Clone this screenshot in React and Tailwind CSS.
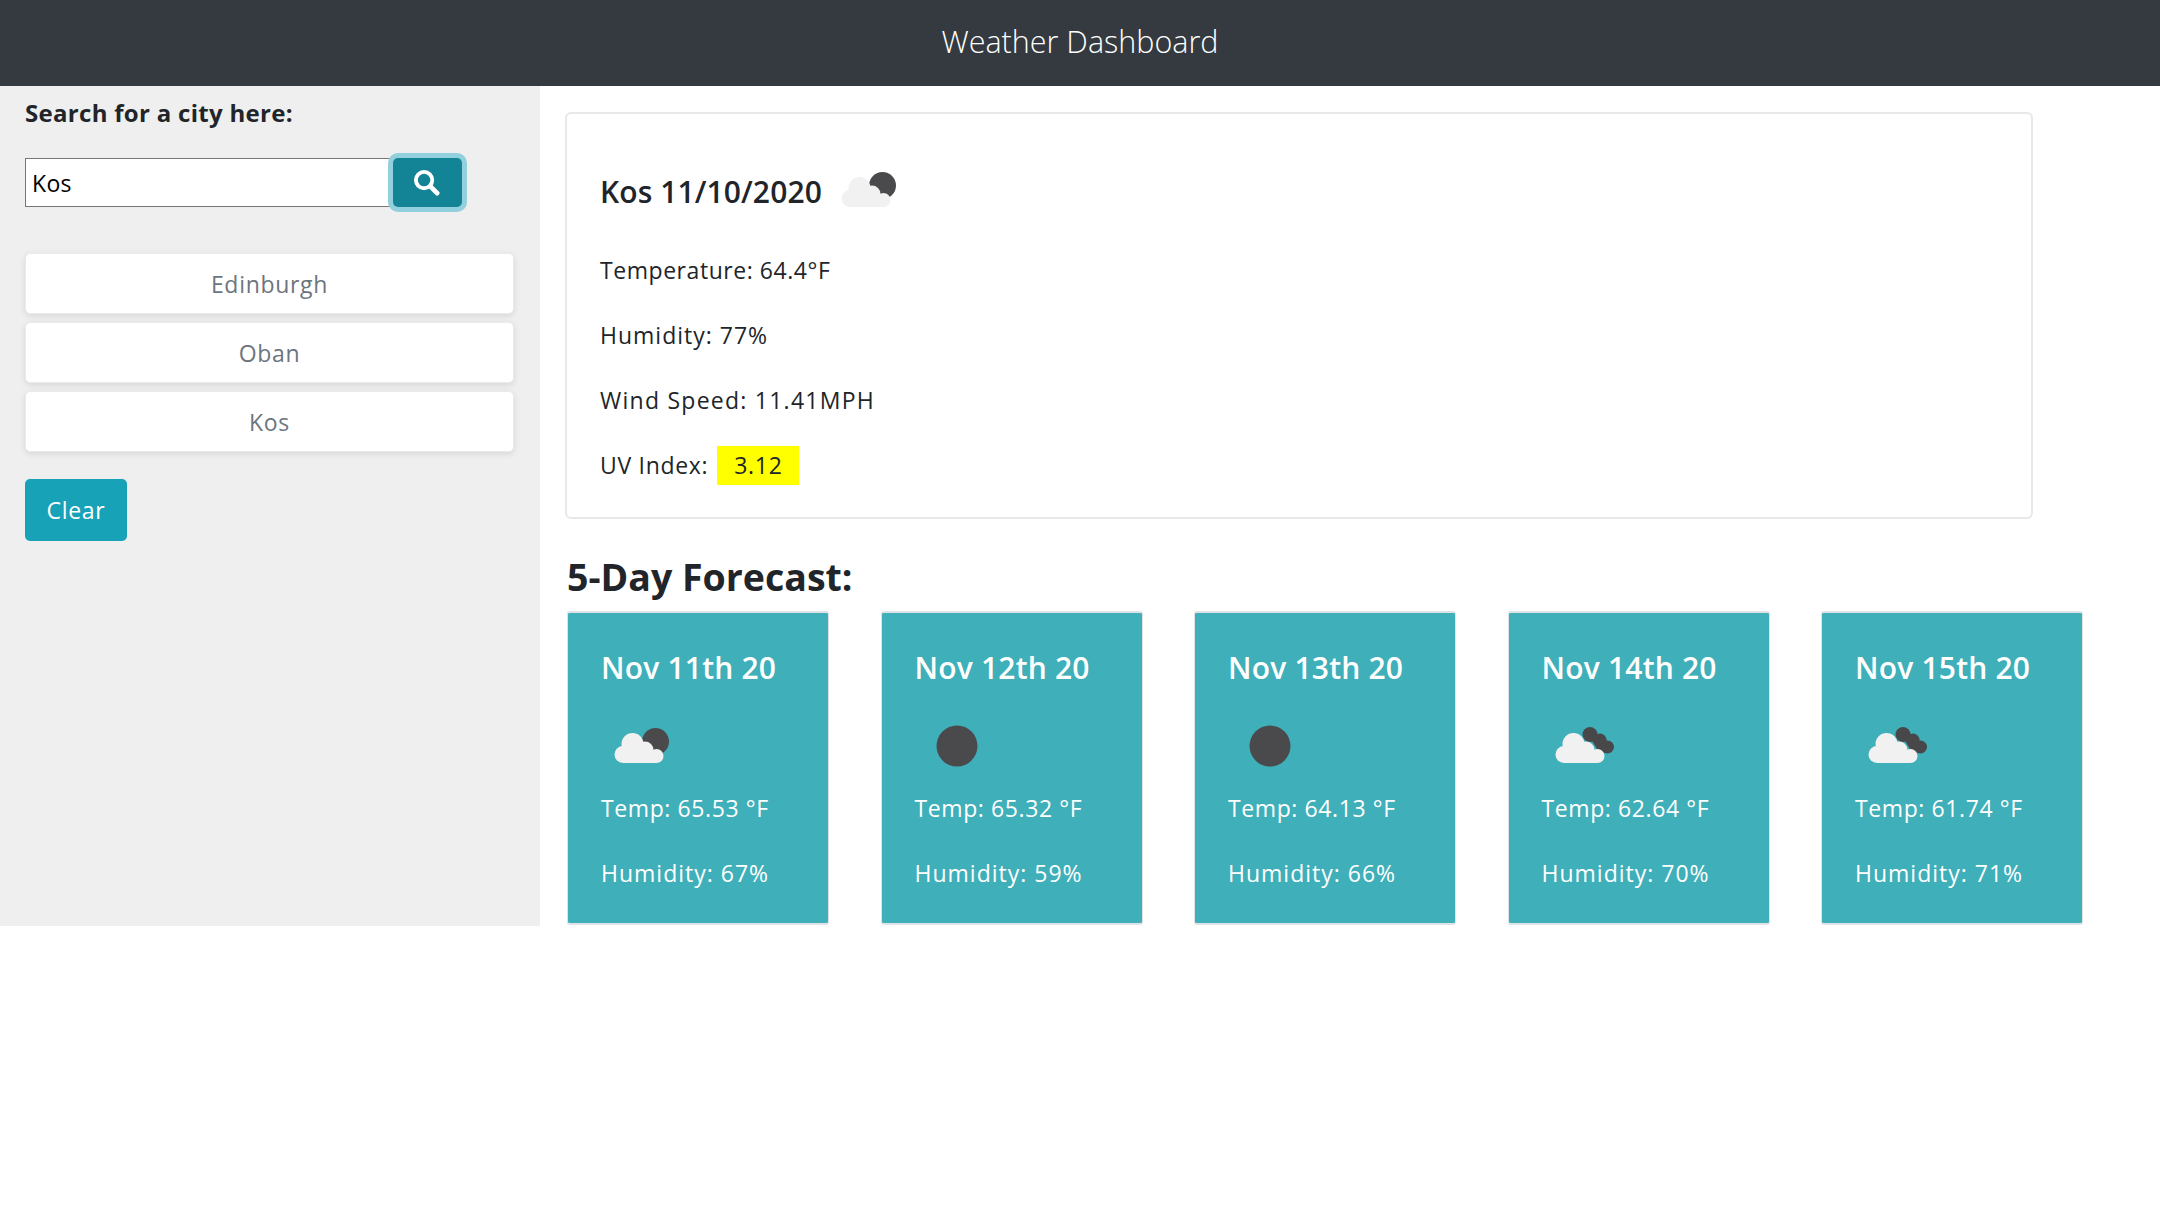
import React from 'react';

const forecast = [
  { date: 'Nov 11th 20', icon: 'few', temp: '65.53', humidity: '67' },
  { date: 'Nov 12th 20', icon: 'clear', temp: '65.32', humidity: '59' },
  { date: 'Nov 13th 20', icon: 'clear', temp: '64.13', humidity: '66' },
  { date: 'Nov 14th 20', icon: 'broken', temp: '62.64', humidity: '70' },
  { date: 'Nov 15th 20', icon: 'broken', temp: '61.74', humidity: '71' },
];

function WeatherIcon({ type }) {
  return (
    <svg width="84" height="60" viewBox="0 0 84 60" className="block shrink-0">
      {type === 'clear' && <circle cx="42" cy="30" r="20.5" fill="#4a4a4d" />}
      {type === 'few' && <circle cx="54.5" cy="25.5" r="13.5" fill="#4a4a4d" />}
      {type === 'broken' && (
        <g fill="#48484b">
          <circle cx="48" cy="18.5" r="7.5" />
          <circle cx="58" cy="24" r="6.5" />
          <circle cx="65.5" cy="31" r="6.5" />
          <path d="M44 15 L62 20 L70 34 L58 38 Z" />
        </g>
      )}
      {type !== 'clear' && (
        <g fill="#f1f1f1">
          <circle cx="22" cy="38.5" r="8.5" />
          <circle cx="31.5" cy="28" r="11" />
          <circle cx="44" cy="34" r="8.5" />
          <circle cx="55.5" cy="40" r="7" />
          <rect x="22" y="34" width="33" height="13" />
        </g>
      )}
    </svg>
  );
}

function ForecastCard({ day }) {
  return (
    <div className="w-[262px] h-[314px] bg-[#3fafb9] border-x border-y-2 border-[#dfe3e6] rounded-[3px] pl-[33px] text-white shrink-0">
      <h5 className="text-[30px] leading-[40px] font-semibold tracking-[0.2px] mt-[35px]">{day.date}</h5>
      <div className="mt-[28px]">
        <WeatherIcon type={day.icon} />
      </div>
      <p className="text-[23px] leading-[33px] tracking-[0.6px] mt-[16px]">Temp: {day.temp} °F</p>
      <p className="text-[23px] leading-[33px] tracking-[1px] mt-[32px]">Humidity: {day.humidity}%</p>
    </div>
  );
}

export default function App() {
  return (
    <div className="min-h-[1210px] bg-white text-[#212529] font-['Open_Sans','Liberation_Sans',sans-serif]">
      <header className="h-[86px] bg-[#343a40] flex items-center justify-center text-white text-[30.5px] font-light pb-[3px]">
        Weather Dashboard
      </header>
      <div className="flex items-start">
        <aside className="w-[540px] h-[840px] bg-[#efefef] px-[25px]">
          <label className="block text-[24px] leading-[36px] font-bold tracking-[0.3px] mt-[9px]">Search for a city here:</label>
          <div className="flex items-center mt-[27px]">
            <input
              type="text"
              defaultValue="Kos"
              className="w-[368px] h-[49px] bg-white border border-[#767676] pl-[6px] text-[23px] tracking-[0.3px] text-black"
            />
            <button className="relative w-[69px] h-[49px] rounded-[5px] bg-[#138496] shadow-[0_0_0_5px_#91d0dc] flex items-center justify-center pr-[2px]">
              <svg width="27" height="27" viewBox="0 0 28 28" fill="none" stroke="white">
                <circle cx="11.5" cy="11.5" r="8.5" strokeWidth="4" />
                <path d="M18 18 L25 25" strokeWidth="5" strokeLinecap="round" />
              </svg>
            </button>
          </div>
          <div className="flex flex-col gap-[8px] mt-[46px] w-[489px]">
            {['Edinburgh', 'Oban', 'Kos'].map((city) => (
              <button key={city} className="h-[61px] bg-white rounded-[5px] border border-[#eaeaea] shadow-[0_2px_6px_rgba(0,0,0,0.1)] text-[#6c757d] text-[23px] tracking-[0.7px] pt-[2px]">
                {city}
              </button>
            ))}
          </div>
          <button className="mt-[27px] w-[102px] h-[62px] rounded-[5px] bg-[#17a2b8] text-white text-[23px] tracking-[0.7px]">Clear</button>
        </aside>
        <main className="pl-[25px] flex-1">
          <section className="w-[1468px] h-[407px] mt-[26px] border-2 border-[#e8e8e8] rounded-[6px] pl-[33px] pt-[44px]">
            <div className="flex items-center h-[60px]">
              <h4 className="text-[30px] font-semibold tracking-[0.1px] w-[228px] pt-[7px]">Kos 11/10/2020</h4>
              <div className="pt-[3px]">
                <WeatherIcon type="few" />
              </div>
            </div>
            <p className="text-[23px] leading-[33px] tracking-[0.55px] mt-[36px]">Temperature: 64.4°F</p>
            <p className="text-[23px] leading-[33px] tracking-[1px] mt-[32px]">Humidity: 77%</p>
            <p className="text-[23px] leading-[33px] tracking-[1.25px] mt-[32px]">Wind Speed: 11.41MPH</p>
            <p className="text-[23px] leading-[33px] tracking-[0.7px] mt-[29px] flex items-center">
              UV Index:
              <span className="ml-[9px] w-[82px] h-[39px] bg-[#ffff00] flex items-center justify-center">3.12</span>
            </p>
          </section>
          <h3 className="text-[37.5px] leading-[46px] font-bold mt-[35px] ml-[2px]">5-Day Forecast:</h3>
          <div className="flex gap-[51.5px] mt-[11px] ml-[2px]">
            {forecast.map((day) => (
              <ForecastCard key={day.date} day={day} />
            ))}
          </div>
        </main>
      </div>
    </div>
  );
}
